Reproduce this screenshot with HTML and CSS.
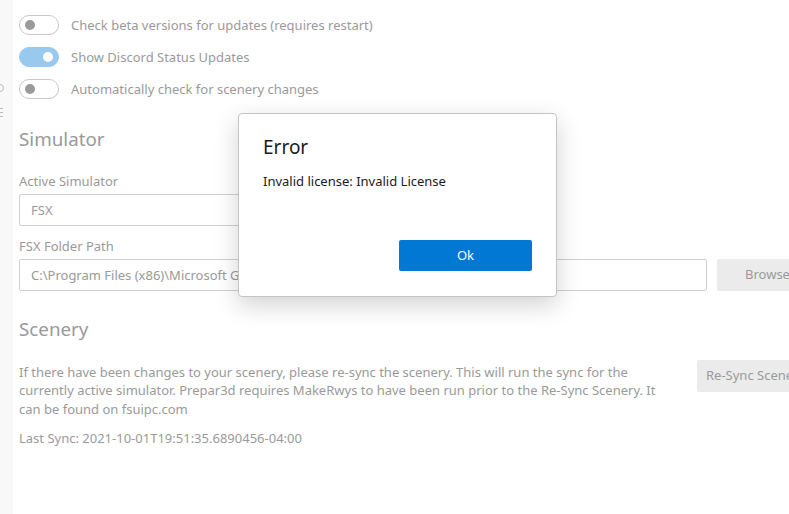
FILE: index.html
```html
<!DOCTYPE html>
<html>
<head>
<meta charset="utf-8">
<link rel="stylesheet" href="styles.css">
</head>
<body>
<div class="app">
  <aside class="rail">
    <svg class="rail-icon ri1" width="8" height="10" viewBox="0 0 8 10"><circle cx="0" cy="5" r="3.5" fill="none" stroke="#bbb" stroke-width="1"/></svg>
    <svg class="rail-icon ri2" width="8" height="12" viewBox="0 0 8 12"><path d="M0 1.5h3M0 5.5h3M0 9.5h3" stroke="#bbb" stroke-width="1"/></svg>
  </aside>
  <main class="main">
    <div class="toggles">
      <div class="trow"><span class="tog"><span class="knob"></span></span><span class="tlabel">Check beta versions for updates (requires restart)</span></div>
      <div class="trow"><span class="tog on"><span class="knob"></span></span><span class="tlabel">Show Discord Status Updates</span></div>
      <div class="trow"><span class="tog"><span class="knob"></span></span><span class="tlabel">Automatically check for scenery changes</span></div>
    </div>

    <h2 class="h">Simulator</h2>
    <div class="label l1">Active Simulator</div>
    <div class="select">FSX</div>
    <div class="label l2">FSX Folder Path</div>
    <div class="row">
      <div class="input">C:\Program Files (x86)\Microsoft Games\Microsoft Flight Simulator X</div>
      <div class="btn browse">Browse</div>
    </div>

    <h2 class="h h2b">Scenery</h2>
    <div class="row scen">
      <p class="para">If there have been changes to your scenery, please re-sync the scenery. This will run the sync for the currently active simulator. Prepar3d requires MakeRwys to have been run prior to the Re-Sync Scenery. It can be found on fsuipc.com</p>
      <div class="btn resync">Re-Sync Scenery</div>
    </div>
    <div class="last">Last Sync: 2021-10-01T19:51:35.6890456-04:00</div>
  </main>
</div>

<div class="dialog">
  <div class="dtitle">Error</div>
  <div class="dmsg">Invalid license: Invalid License</div>
  <div class="dactions"><div class="okbtn">Ok</div></div>
</div>
</body>
</html>
```
FILE: styles.css
```css
html, body {
  margin: 0;
  padding: 0;
  width: 789px;
  height: 514px;
  overflow: hidden;
  background: #fff;
  font-family: "Noto Sans", "Open Sans", sans-serif;
}
.app {
  display: flex;
  height: 514px;
}
.rail {
  width: 13px;
  flex: none;
  background: #f8f8f8;
  position: relative;
}
.rail-icon { position: absolute; left: 0; }
.ri1 { top: 83px; }
.ri2 { top: 107px; }
.main {
  flex: none;
  width: 800px;
  padding-left: 6px;
  color: #9a9a9a;
  font-size: 13px;
}
.toggles {
  padding-top: 15px;
  display: flex;
  flex-direction: column;
  gap: 12px;
}
.trow {
  display: flex;
  align-items: center;
  height: 20px;
}
.tog {
  box-sizing: border-box;
  width: 40px;
  height: 20px;
  border: 1px solid #c8c8c8;
  border-radius: 10px;
  position: relative;
  flex: none;
}
.tog .knob {
  position: absolute;
  width: 10px;
  height: 10px;
  border-radius: 50%;
  background: #9a9a9a;
  left: 5px;
  top: 4px;
}
.tog.on {
  background: #99c9ef;
  border-color: #99c9ef;
}
.tog.on .knob {
  background: #fff;
  left: auto;
  right: 5px;
}
.tlabel {
  margin-left: 12px;
  line-height: 20px;
}
.h {
  margin: 27px 0 0;
  font-weight: normal;
  font-size: 18.8px;
  line-height: 27px;
  color: #9a9a9a;
}
.h2b { margin-top: 25px; }
.label {
  line-height: 19px;
}
.l1 { margin-top: 19px; }
.l2 { margin-top: 11px; }
.select, .input {
  box-sizing: border-box;
  height: 32px;
  border: 1px solid #cfcfcf;
  border-radius: 2px;
  padding: 0 11px;
  line-height: 30px;
  white-space: nowrap;
  overflow: hidden;
}
.select {
  margin-top: 3px;
  width: 420px;
}
.row {
  display: flex;
  gap: 10px;
  margin-top: 3px;
}
.input { width: 688px; flex: none; }
.btn {
  background: #ebebeb;
  border-radius: 2px;
  height: 32px;
  line-height: 31px;
  padding: 0 9px;
  box-sizing: border-box;
  white-space: nowrap;
  flex: none;
}
.browse { width: 80px; padding-left: 28px; }
.scen {
  margin-top: 20px;
  gap: 18px;
  align-items: flex-start;
}
.para {
  margin: 0;
  width: 660px;
  line-height: 18.4px;
  flex: none;
}
.resync { margin-top: -3px; }
.last {
  margin-top: 11px;
  line-height: 19px;
}

.dialog {
  position: absolute;
  left: 238px;
  top: 113px;
  width: 319px;
  height: 184px;
  box-sizing: border-box;
  background: #fff;
  border: 1px solid #c4c4c4;
  border-radius: 4px;
  box-shadow: 0 8px 24px rgba(0,0,0,0.18);
  padding: 20px 24px 0;
  color: #1b1b1b;
  font-family: "Noto Sans", "Open Sans", sans-serif;
}
.dtitle {
  font-size: 19px;
  line-height: 26px;
}
.dmsg {
  font-size: 13px;
  margin-top: 12px;
  line-height: 19px;
}
.dactions {
  display: flex;
  justify-content: flex-end;
  margin-top: 49px;
}
.okbtn {
  width: 133px;
  height: 31px;
  line-height: 31px;
  text-align: center;
  background: #0078d4;
  color: #fff;
  border-radius: 2px;
  font-size: 13px;
}
```
